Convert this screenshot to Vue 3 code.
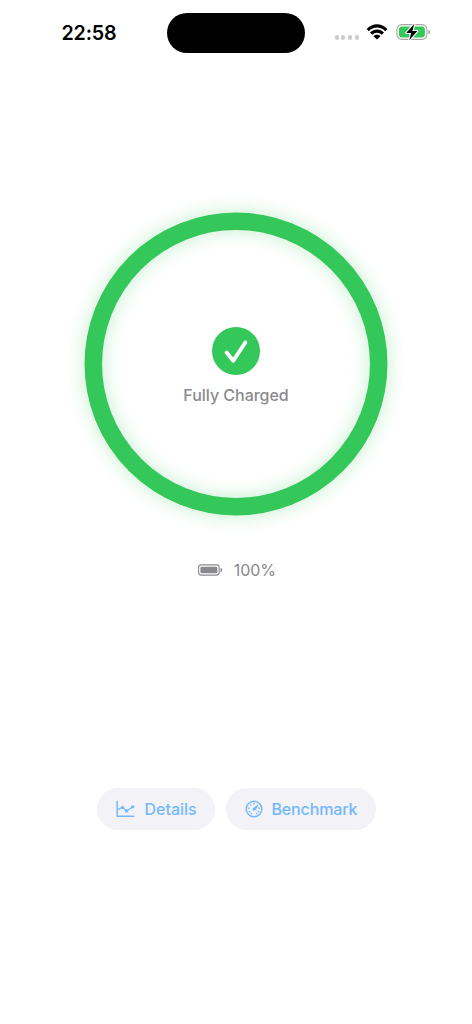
<script setup>
const gaugeTicks = [-150, -120, -80, -40, 0, 80, 120, 150].map((a) => {
  const r = (a * Math.PI) / 180
  return { x: 9 + 5.2 * Math.sin(r), y: 9 - 5.2 * Math.cos(r) }
})
</script>

<template>
  <div class="screen">
    <header class="status">
      <span class="time">22:58</span>
      <div class="island"></div>
      <div class="indicators">
        <div class="dots"><i v-for="n in 4" :key="n"></i></div>
        <svg class="wifi" width="22" height="16" viewBox="0 0 22 16">
          <path d="M0.6 5.1 C6.3 -1.3 15.7 -1.3 21.4 5.1 L19.2 7.2 C14.6 2.2 7.4 2.2 2.8 7.2 Z" />
          <path d="M4 8.6 C8 4.5 14 4.5 18 8.6 L15.8 10.8 C13 8 9 8 6.2 10.8 Z" />
          <path d="M7.5 12.2 C9.5 10.3 12.5 10.3 14.5 12.2 L11 15.6 Z" />
        </svg>
        <svg class="charging" width="35" height="20" viewBox="0 0 35 20">
          <rect x="0.9" y="2.6" width="30" height="14.8" rx="5" fill="none" stroke="#a5a5a5" stroke-width="1.1" />
          <path d="M32.4 7.7 C34.8 8.5 34.8 11.5 32.4 12.3 Z" fill="#a5a5a5" />
          <rect x="2.9" y="4.5" width="26" height="11" rx="3.3" fill="#34c759" />
          <path d="M18.3 1.8 L10.2 11 H15.2 L13.2 18.2 L21.4 9 H16.4 Z" fill="#000" stroke="#fff" stroke-width="2.2" stroke-linejoin="round" paint-order="stroke" />
        </svg>
      </div>
    </header>

    <main class="content">
      <section class="ring">
        <svg class="track" width="304" height="304" viewBox="0 0 304 304">
          <circle cx="152" cy="152" r="142.7" fill="none" stroke="#34c759" stroke-width="17.5" />
        </svg>
        <div class="center">
          <svg width="48" height="48" viewBox="0 0 48 48">
            <circle cx="24" cy="24" r="24" fill="#34c759" />
            <path d="M14.6 25.6 L21.3 33.8 L33.3 15.5" fill="none" stroke="#fff" stroke-width="3.9" stroke-linecap="round" stroke-linejoin="round" />
          </svg>
          <span class="state">Fully Charged</span>
        </div>
      </section>

      <section class="level">
        <svg width="25" height="12" viewBox="0 0 25 12">
          <rect x="0.6" y="0.9" width="20.6" height="10.2" rx="2.8" fill="none" stroke="#8a8a8e" stroke-width="1.1" />
          <rect x="2.4" y="2.7" width="17" height="6.6" rx="1.3" fill="#8a8a8e" />
          <path d="M22.5 4 C24.7 4.6 24.7 7.4 22.5 8 Z" fill="#8a8a8e" />
        </svg>
        <span>100%</span>
      </section>

      <nav class="actions">
        <button class="pill details" type="button">
          <svg width="19" height="18" viewBox="0 0 19 18">
            <path d="M1.2 1.5 V16.3 H17.8" fill="none" stroke="#74b9fc" stroke-width="1.5" stroke-linecap="round" stroke-linejoin="round" />
            <path d="M1.5 9.9 L6.5 7.3 L10.6 10.9 L16.6 6.9" fill="none" stroke="#74b9fc" stroke-width="1.2" />
            <g fill="#74b9fc">
              <circle cx="6.5" cy="7.4" r="1.6" />
              <circle cx="10.6" cy="10.9" r="1.7" />
              <circle cx="16.7" cy="6.8" r="1.6" />
            </g>
          </svg>
          <span>Details</span>
        </button>
        <button class="pill benchmark" type="button">
          <svg width="18" height="18" viewBox="0 0 18 18">
            <circle cx="9" cy="9" r="7.8" fill="none" stroke="#74b9fc" stroke-width="1.5" />
            <g fill="#74b9fc">
              <circle v-for="(t, i) in gaugeTicks" :key="i" :cx="t.x" :cy="t.y" r="0.85" />
              <path d="M12.9 4.6 L13.4 5.1 L10.6 10.1 C9.3 11.8 6.6 10 7.6 8.2 Z" />
            </g>
          </svg>
          <span>Benchmark</span>
        </button>
      </nav>
    </main>
  </div>
</template>

<style>
body {
  margin: 0;
  background: #fff;
}
</style>

<style scoped>
.screen {
  width: 472px;
  height: 1024px;
  overflow: hidden;
  background: #fff;
  font-family: Inter, "Liberation Sans", sans-serif;
}
svg {
  display: block;
  flex: none;
}
.status {
  display: grid;
  grid-template-columns: 167px 138px 1fr;
  height: 40px;
  padding-top: 13px;
}
.time {
  padding-left: 61.5px;
  font-size: 19.7px;
  font-weight: 600;
  line-height: 40px;
  letter-spacing: -0.2px;
}
.island {
  height: 40px;
  border-radius: 20px;
  background: #000;
}
.indicators {
  display: flex;
  align-items: center;
  height: 38px;
  padding-left: 29.5px;
}
.dots {
  display: flex;
  gap: 2.5px;
  padding-top: 11px;
}
.dots i {
  width: 4.2px;
  height: 4.2px;
  border-radius: 50%;
  background: #ccc;
}
.wifi {
  margin-left: 7.7px;
}
.charging {
  margin-left: 7.1px;
}
.content {
  display: flex;
  flex-direction: column;
  align-items: center;
}
.ring {
  display: grid;
  justify-items: center;
  width: 304px;
  height: 304px;
  margin-top: 159px;
}
.track,
.center {
  grid-area: 1 / 1;
}
.track {
  overflow: visible;
  filter: drop-shadow(0 0 9.5px rgba(52, 199, 89, 0.3));
}
.center {
  display: flex;
  flex-direction: column;
  align-items: center;
  padding-top: 115px;
}
.state {
  margin-top: 10px;
  font-size: 16px;
  font-weight: 450;
  line-height: 20px;
  letter-spacing: -0.02px;
  color: #8a8a8e;
  white-space: nowrap;
}
.level {
  display: flex;
  align-items: center;
  gap: 10.5px;
  height: 24px;
  margin-top: 41.5px;
  margin-left: 2px;
  font-size: 16px;
  letter-spacing: -0.1px;
  color: #8a8a8e;
}
.actions {
  display: flex;
  gap: 11px;
  margin-top: 206.5px;
}
.pill {
  display: flex;
  align-items: center;
  box-sizing: border-box;
  height: 42px;
  margin: 0;
  padding: 0 0 0 19px;
  border: 0;
  border-radius: 21px;
  background: #f2f2f7;
  color: #74b9fc;
  font: 500 16px/20px Inter, "Liberation Sans", sans-serif;
}
.details {
  width: 118px;
  gap: 10px;
}
.benchmark {
  width: 150px;
  gap: 9px;
  letter-spacing: -0.15px;
}
</style>
